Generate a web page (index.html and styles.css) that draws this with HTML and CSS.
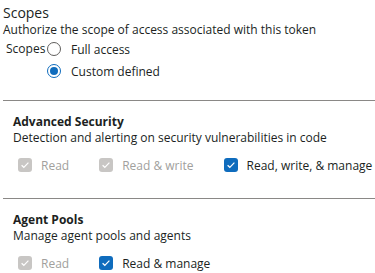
FILE: index.html
```html
<!DOCTYPE html>
<html>
<head>
<meta charset="utf-8">
<link rel="stylesheet" href="styles.css">
</head>
<body>
<div class="page">
  <div class="title">Scopes</div>
  <div class="subtitle">Authorize the scope of access associated with this token</div>
  <div class="scopes">
    <div class="scopes-label">Scopes</div>
    <div class="radios">
      <div class="radio-row"><span class="radio"></span><span>Full access</span></div>
      <div class="radio-row"><span class="radio checked"></span><span>Custom defined</span></div>
    </div>
  </div>
  <div class="divider first"></div>
  <div class="section">
    <div class="sec-title">Advanced Security</div>
    <div class="sec-desc">Detection and alerting on security vulnerabilities in code</div>
    <div class="checks">
      <div class="check disabled"><span class="box"><svg viewBox="0 0 14 14" width="14" height="14"><path d="M3.6 7.2l2.2 2.1 4.6-4.6" fill="none" stroke="#fff" stroke-width="1.2"/></svg></span><span>Read</span></div>
      <div class="check disabled"><span class="box"><svg viewBox="0 0 14 14" width="14" height="14"><path d="M3.6 7.2l2.2 2.1 4.6-4.6" fill="none" stroke="#fff" stroke-width="1.2"/></svg></span><span>Read &amp; write</span></div>
      <div class="check on"><span class="box"><svg viewBox="0 0 14 14" width="14" height="14"><path d="M3.6 7.2l2.2 2.1 4.6-4.6" fill="none" stroke="#fff" stroke-width="1.2"/></svg></span><span>Read, write, &amp; manage</span></div>
    </div>
  </div>
  <div class="divider"></div>
  <div class="section">
    <div class="sec-title">Agent Pools</div>
    <div class="sec-desc">Manage agent pools and agents</div>
    <div class="checks">
      <div class="check disabled"><span class="box"><svg viewBox="0 0 14 14" width="14" height="14"><path d="M3.6 7.2l2.2 2.1 4.6-4.6" fill="none" stroke="#fff" stroke-width="1.2"/></svg></span><span>Read</span></div>
      <div class="check on"><span class="box"><svg viewBox="0 0 14 14" width="14" height="14"><path d="M3.6 7.2l2.2 2.1 4.6-4.6" fill="none" stroke="#fff" stroke-width="1.2"/></svg></span><span>Read &amp; manage</span></div>
    </div>
  </div>
</div>
</body>
</html>
```
FILE: styles.css
```css
html, body {
  margin: 0;
  padding: 0;
  background: #fff;
}
body {
  font-family: "Open Sans", "Noto Sans", sans-serif;
  color: #201f1e;
  font-size: 12px;
  overflow: hidden;
  white-space: nowrap;
}
.page {
  padding-left: 3px;
}
.title {
  font-size: 14px;
  line-height: 19px;
  padding-top: 3px;
}
.subtitle {
  line-height: 16px;
}
.scopes {
  display: flex;
  padding-left: 3px;
  margin-top: 1px;
}
.scopes-label {
  line-height: 20px;
  width: 41px;
}
.radios {
  display: flex;
  flex-direction: column;
  gap: 2px;
}
.radio-row {
  display: flex;
  align-items: center;
  height: 20px;
  gap: 10px;
}
.radio {
  width: 12px;
  height: 12px;
  border: 1px solid #605e5c;
  border-radius: 50%;
  box-sizing: content-box;
}
.radio.checked {
  border-color: #0f6cbd;
  position: relative;
}
.radio.checked::after {
  content: "";
  position: absolute;
  left: 2px;
  top: 2px;
  width: 8px;
  height: 8px;
  border-radius: 50%;
  background: #0f6cbd;
}
.divider {
  height: 1px;
  background: #8a8886;
  margin-top: 23px;
}
.divider.first {
  margin-top: 19px;
}
.section {
  padding-left: 10px;
  padding-top: 13px;
}
.sec-title {
  font-weight: 700;
  line-height: 16px;
}
.sec-desc {
  line-height: 16px;
}
.checks {
  display: flex;
  gap: 30px;
  padding-left: 5px;
  margin-top: 9px;
}
.check {
  display: flex;
  align-items: center;
  gap: 9px;
  height: 20px;
}
.box {
  width: 14px;
  height: 14px;
  border-radius: 3px;
  display: flex;
}
.check.disabled {
  color: #a19f9d;
}
.check.disabled .box {
  background: #c8c6c4;
}
.check.on .box {
  background: #0f6cbd;
}
```
